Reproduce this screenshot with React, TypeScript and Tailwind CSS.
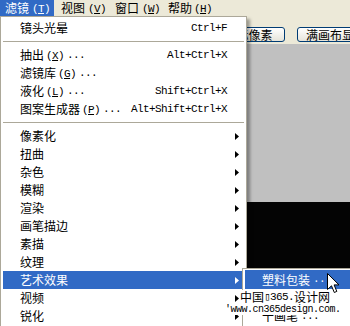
import React from "react";

const CN = '"Noto Sans CJK SC", "Noto Sans", sans-serif';
const MONO = '"Liberation Mono", "Noto Sans CJK SC", monospace';

function Mn({ k }: { k: string }) {
  return (
    <span style={{ fontFamily: MONO }} className="text-[11px] tracking-[-0.6px]">
      (<span className="underline underline-offset-[1px]">{k}</span>)
    </span>
  );
}

function Dots() {
  return (
    <span style={{ fontFamily: MONO }} className="text-[11px] tracking-[-0.6px] ml-[3px]">
      ...
    </span>
  );
}

function Arrow({ white }: { white?: boolean }) {
  return (
    <svg width="4" height="7" viewBox="0 0 4 7" className="mr-[5px]">
      <path d="M0 0 L4 3.5 L0 7 Z" fill={white ? "#fff" : "#000"} />
    </svg>
  );
}

type Item =
  | { sep: true }
  | { sep?: false; cn: string; k?: string; dots?: boolean; sc?: string; sub?: boolean; hl?: boolean };

const items: Item[] = [
  { cn: "镜头光晕", sc: "Ctrl+F" },
  { sep: true },
  { cn: "抽出", k: "X", dots: true, sc: "Alt+Ctrl+X" },
  { cn: "滤镜库", k: "G", dots: true },
  { cn: "液化", k: "L", dots: true, sc: "Shift+Ctrl+X" },
  { cn: "图案生成器", k: "P", dots: true, sc: "Alt+Shift+Ctrl+X" },
  { sep: true },
  { cn: "像素化", sub: true },
  { cn: "扭曲", sub: true },
  { cn: "杂色", sub: true },
  { cn: "模糊", sub: true },
  { cn: "渲染", sub: true },
  { cn: "画笔描边", sub: true },
  { cn: "素描", sub: true },
  { cn: "纹理", sub: true },
  { cn: "艺术效果", sub: true, hl: true },
  { cn: "视频", sub: true },
  { cn: "锐化", sub: true },
];

function MenuRow({ it }: { it: Item }) {
  if (it.sep) {
    return (
      <div className="h-[9px] flex items-center">
        <div className="h-px w-full bg-[#ACA899]" />
      </div>
    );
  }
  return (
    <div
      className={`h-[18px] flex items-center pl-[17px] text-[12px] leading-none ${
        it.hl ? "bg-[#316AC5] text-white" : "text-black"
      }`}
    >
      <span className="flex items-center">
        <span>{it.cn}</span>
        {it.k && <span className="ml-[2px]"><Mn k={it.k} /></span>}
        {it.dots && <Dots />}
      </span>
      <span className="flex-1" />
      {it.sc && (
        <span style={{ fontFamily: MONO }} className="text-[11px] tracking-[-0.6px] mr-[17px]">
          {it.sc}
        </span>
      )}
      {it.sub && <Arrow white={it.hl} />}
    </div>
  );
}

export default function App() {
  return (
    <div
      style={{ fontFamily: CN }}
      className="relative w-[350px] h-[326px] overflow-hidden bg-[#ECE9D8] flex flex-col text-[12px] text-black"
    >
      {/* menu bar */}
      <div className="h-[16px] flex items-stretch leading-none shrink-0">
        <div className="w-[54px] pl-[5px] bg-[#316AC5] text-white flex items-center">
          <span>滤镜</span>
          <span className="ml-[3px]"><Mn k="T" /></span>
        </div>
        <div className="w-[54px] pl-[7px] flex items-center">
          <span>视图</span>
          <span className="ml-[3px]"><Mn k="V" /></span>
        </div>
        <div className="w-[54px] pl-[7px] flex items-center">
          <span>窗口</span>
          <span className="ml-[3px]"><Mn k="W" /></span>
        </div>
        <div className="w-[60px] pl-[6px] flex items-center">
          <span>帮助</span>
          <span className="ml-[2px]"><Mn k="H" /></span>
        </div>
      </div>

      {/* options bar */}
      <div className="h-[28px] shrink-0 flex items-start pt-[11px] pl-[212px] gap-[12px]">
        <div className="h-[15px] w-[73px] shrink-0 rounded-[3px] border border-[#003C74] bg-gradient-to-b from-white to-[#E6E4DA] flex items-center justify-center leading-none">
          实际像素
        </div>
        <div className="h-[15px] w-[80px] shrink-0 rounded-[3px] border border-[#003C74] bg-gradient-to-b from-white to-[#E6E4DA] flex items-center justify-start pl-[8px] leading-none overflow-hidden whitespace-nowrap">
          满画布显示
        </div>
      </div>

      {/* workspace */}
      <div className="flex-1 flex flex-col bg-[#C0C0C0]">
        <div className="h-[158px] shrink-0" />
        <div className="flex-1 bg-[#040404]" />
      </div>

      {/* dropdown */}
      <div className="absolute left-0 top-[16px] w-[247px] h-[320px] bg-white border border-[#ACA899] p-[2px] shadow-[3px_3px_3px_rgba(0,0,0,0.35)]">
        {items.map((it, i) => (
          <MenuRow key={i} it={it} />
        ))}
      </div>

      {/* submenu */}
      <div className="absolute left-[242px] top-[268px] w-[140px] h-[70px] bg-white border border-[#ACA899] px-[2px] py-[1px] text-[12px] leading-none">
        <div className="h-[19px] flex items-center pl-[17px] bg-[#316AC5] text-white">
          塑料包装<Dots />
        </div>
        <div className="h-[18px]" />
        <div className="h-[18px] flex items-center pl-[17px]">
          干画笔<Dots />
        </div>
      </div>

      {/* watermark */}
      <div className="absolute left-[240px] top-[290px] h-[14px] bg-white flex items-center leading-none text-[12px] pr-[2px]">
        <span>中国</span>
        <span style={{ fontFamily: MONO }} className="text-[11px] tracking-[-0.6px]">▯365.</span>
        <span>设计网</span>
      </div>
      <div
        style={{ fontFamily: MONO }}
        className="absolute left-[225px] top-[304px] h-[11px] bg-white flex items-center leading-none text-[10px] tracking-[-0.5px]"
      >
        'www.cn365design.com.
      </div>

      {/* cursor */}
      <svg className="absolute left-[327px] top-[273px]" width="13" height="21" viewBox="0 0 13 21">
        <path
          d="M0.5 0.5 L0.5 16.5 L4.5 12.8 L7.3 19.5 L9.8 18.4 L7.1 11.9 L12 11.9 Z"
          fill="#fff"
          stroke="#000"
          strokeWidth="1"
          strokeLinejoin="miter"
        />
      </svg>
    </div>
  );
}
